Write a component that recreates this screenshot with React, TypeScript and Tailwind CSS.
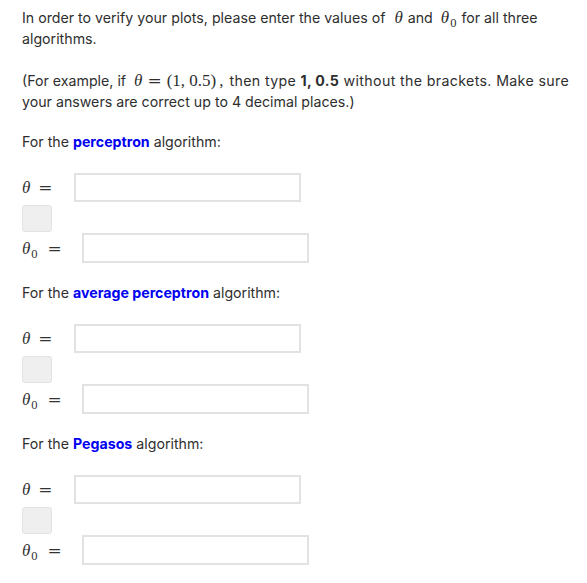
const mathFont = { fontFamily: '"Liberation Serif", "DejaVu Serif", serif' };
const eqFont = { fontFamily: '"DejaVu Serif", serif' };

const Theta = ({ sub }: { sub?: boolean }) => (
  <span className="italic text-[17px] leading-none" style={mathFont}>
    θ
    {sub && <span className="not-italic text-[12.5px] relative top-[4px] ml-[1px]">0</span>}
  </span>
);

const Eq = ({ className }: { className: string }) => (
  <span className={`text-[17px] font-light leading-none ${className}`} style={eqFont}>
    =
  </span>
);

const AnswerRow = ({ sub, h }: { sub?: boolean; h: string }) => (
  <div className="flex items-center">
    <div className="flex items-center text-[#333]">
      <Theta sub={sub} />
      <Eq className={sub ? 'ml-[10px]' : 'ml-[8px]'} />
    </div>
    <div className={`${sub ? 'ml-[20px]' : 'ml-[21px]'} ${h} w-[227px] border-2 border-[#e2e2e2] bg-white`} />
  </div>
);

const Section = ({ name }: { name: string }) => (
  <div className="mb-[19px]">
    <p className="leading-[21px]">
      For the <b className="text-[#0000f0] font-bold">{name}</b> algorithm:
    </p>
    <div className="mt-[21px]">
      <AnswerRow h="h-[29px]" />
      <div className="mt-[3px] w-[30px] h-[27px] rounded-[3px] bg-[#efefef] border border-[#e2e2e2]" />
      <div className="mt-[1px]">
        <AnswerRow sub h="h-[30px]" />
      </div>
    </div>
  </div>
);

export default function App() {
  return (
    <div
      className="bg-white min-h-[583px] pl-[22px] pr-[8px] pt-[7px] text-[14.2px] text-[#2e2e2e]"
      style={{ fontFamily: 'Inter, "Noto Sans", sans-serif' }}
    >
      <p className="leading-[21px]">
        In order to verify your plots, please enter the values of{' '}
        <span className="ml-[5px] mr-[1px]">
          <Theta />
        </span>{' '}
        and{' '}
        <span className="ml-[4px] mr-[1px]">
          <Theta sub />
        </span>{' '}
        for all three
        <br />
        algorithms.
      </p>
      <p className="leading-[21px] mt-[21px]">
        (For example, if{' '}
        <span className="text-[17px] leading-none ml-[4px] mr-[3px]" style={mathFont}>
          <i>θ</i>
          <span className="mx-[5px] font-light" style={eqFont}>
            =
          </span>
          (1, 0.5)
        </span>
        <span className="text-[17px] leading-none mr-[6px]" style={mathFont}>,</span>
        <span className="tracking-[0.35px]">
          then type <b>1, 0.5</b> without the brackets. Make sure
        </span>
        <br />
        your answers are correct up to 4 decimal places.)
      </p>
      <div className="mt-[19px]">
        <Section name="perceptron" />
        <Section name="average perceptron" />
        <Section name="Pegasos" />
      </div>
    </div>
  );
}
